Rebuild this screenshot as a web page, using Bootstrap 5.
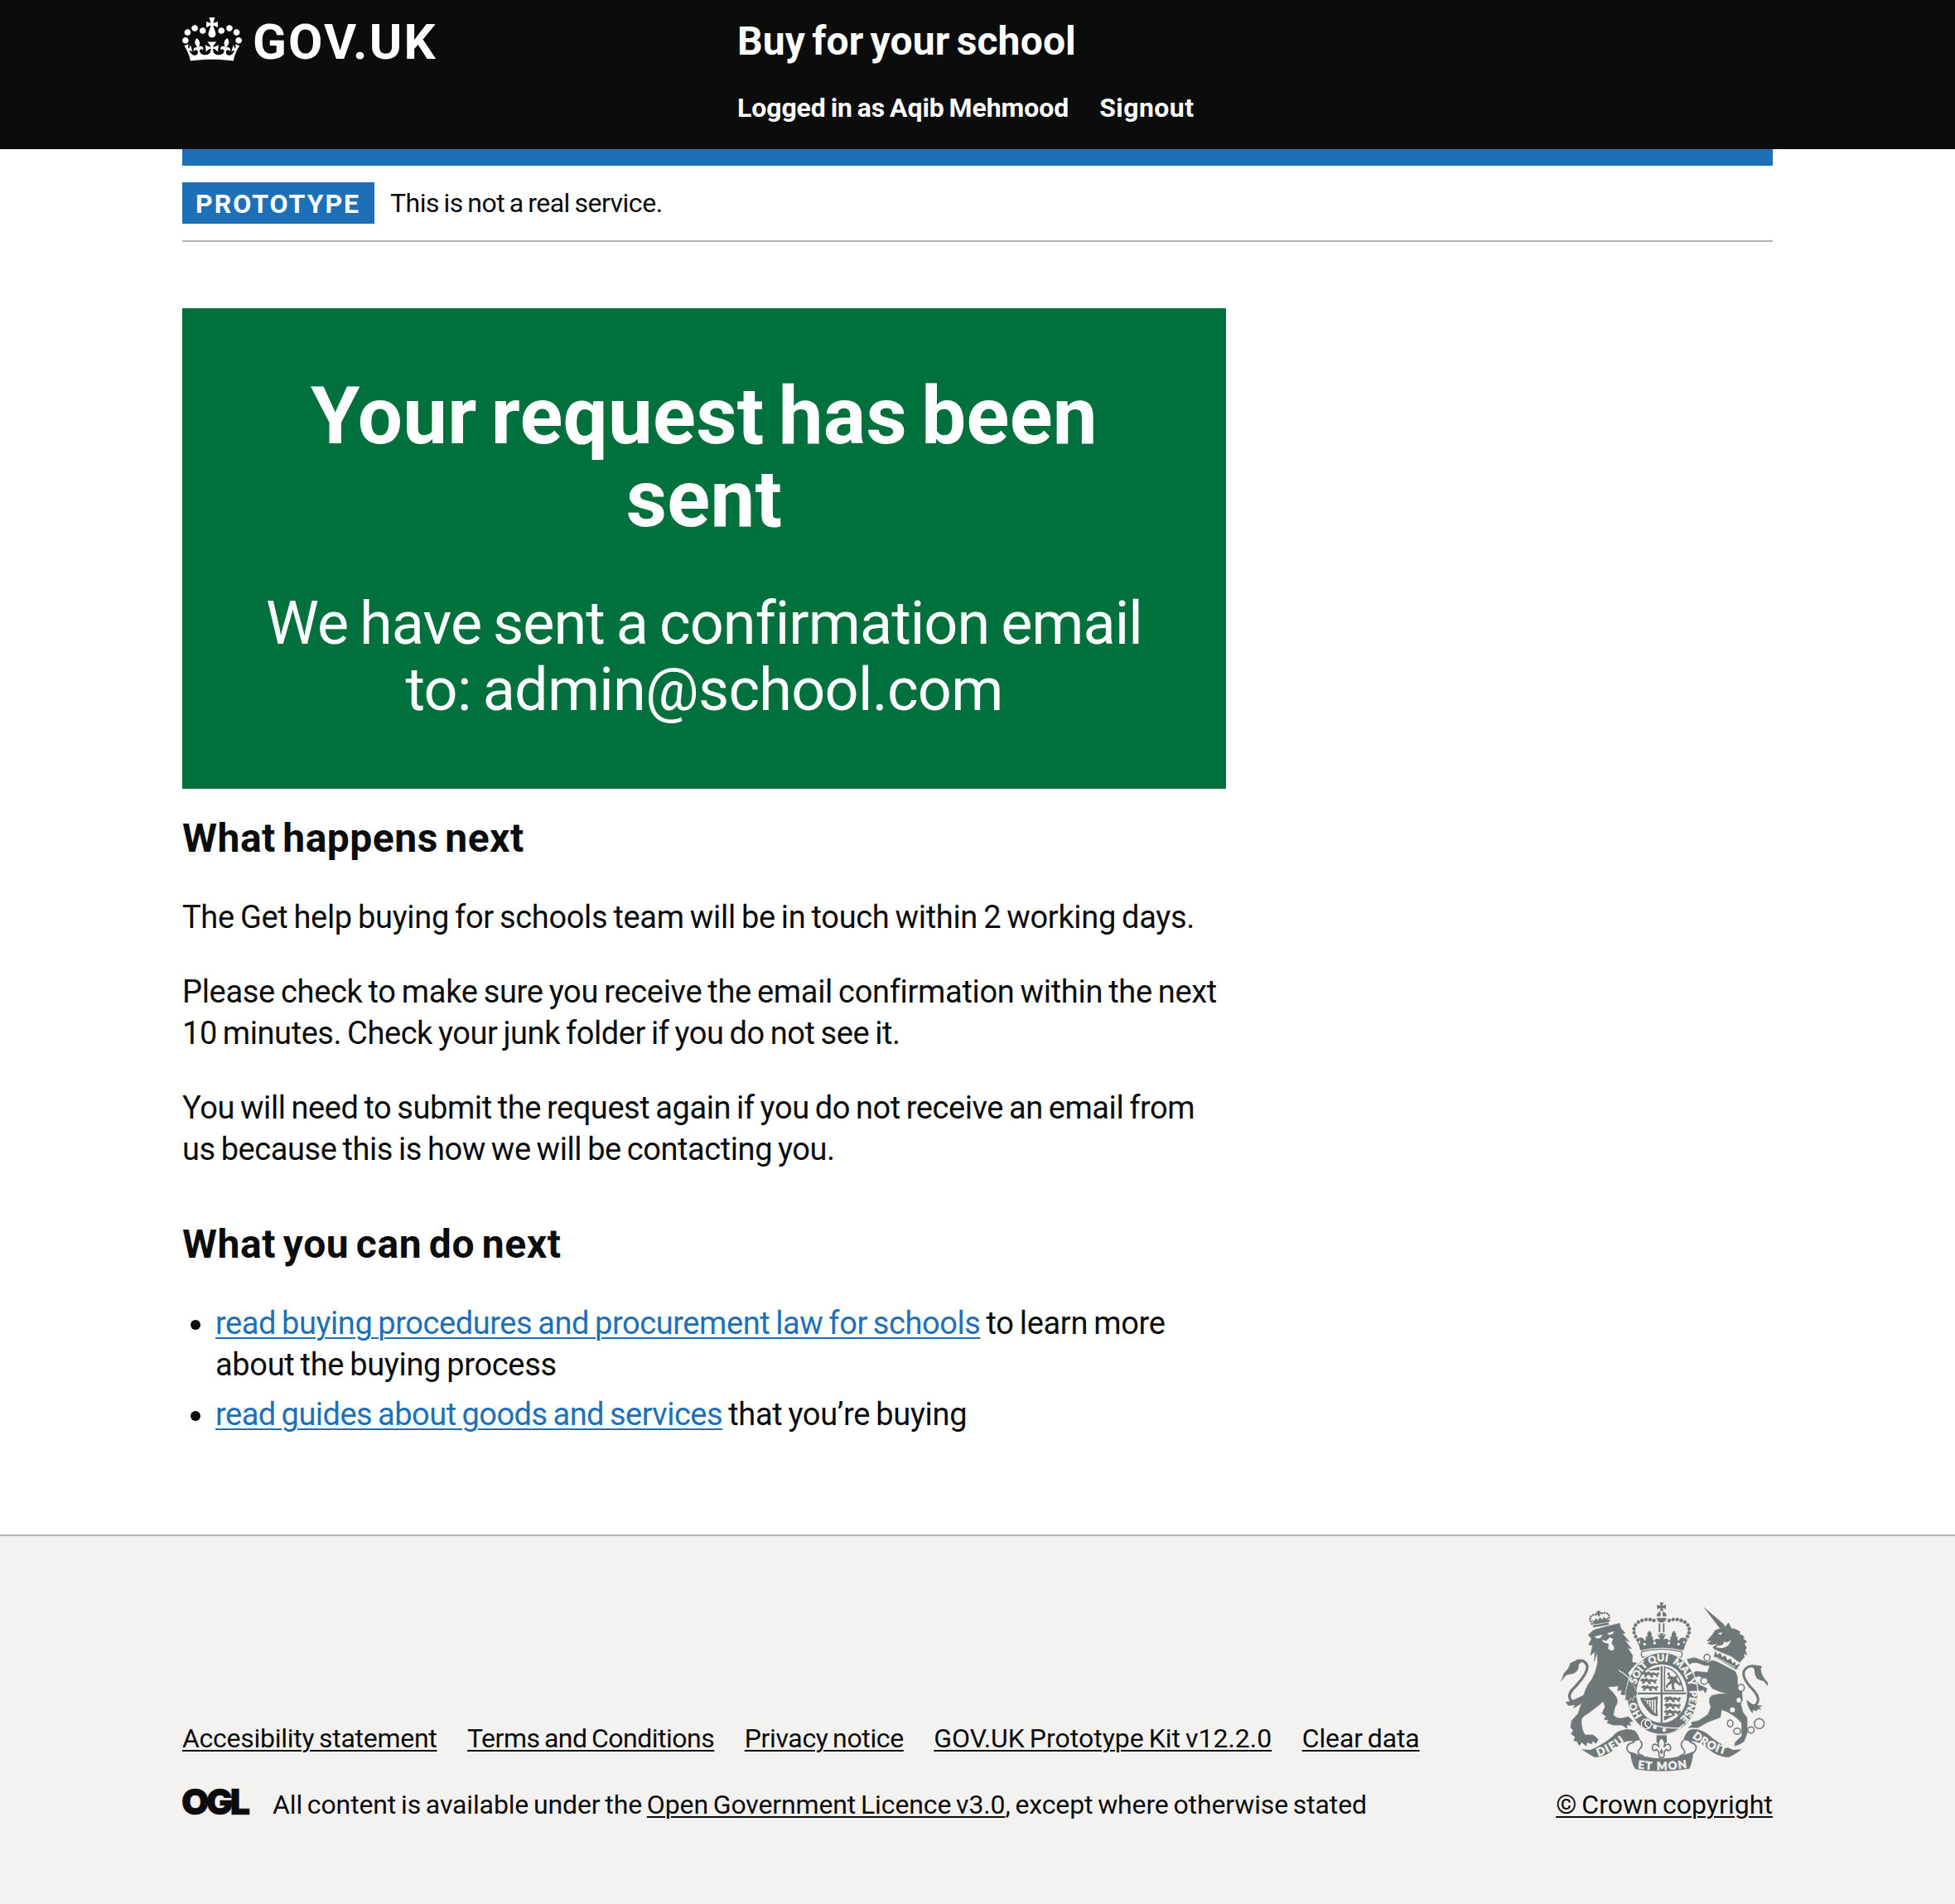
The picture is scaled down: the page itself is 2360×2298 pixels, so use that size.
<!DOCTYPE html>
<html lang="en">
<head>
<meta charset="utf-8">
<meta name="viewport" content="width=device-width, initial-scale=1">
<title>Your request has been sent - Buy for your school</title>
<link href="https://cdn.jsdelivr.net/npm/bootstrap@5.3.0/dist/css/bootstrap.min.css" rel="stylesheet">
<style>
  :root { --ink:#0b0c0c; --brand:#1d70b8; --rule:#b1b4b6; --go:#00703c; --pale:#f3f2f1; }
  body { font-family:Roboto,"Liberation Sans",sans-serif; color:var(--ink); font-size:38px; line-height:50px; letter-spacing:-.32px; word-spacing:-2px; }
  .page-width { width:1920px; }
  .site-header { background:var(--ink); height:180px; padding-top:20px; }
  .site-header a, .site-header a:hover { color:#fff; }
  .logo-col { width:670px; }
  .crown-mark { width:72px; height:53px; margin-top:1px; }
  .logotype { font-size:60px; line-height:62px; letter-spacing:2.2px; margin-left:13px; }
  .service-name { font-size:48px; line-height:60px; letter-spacing:.15px; word-spacing:-4px; margin-bottom:30px; }
  .account-nav { font-size:32px; line-height:40px; letter-spacing:-.08px; gap:37px; }
  .account-nav .signout { letter-spacing:.45px; }
  .brand-bar { height:20px; background:var(--brand); }
  .phase { padding:20px 0; border-bottom:2px solid var(--rule); height:92px; }
  .phase-tag { background:var(--brand); font-size:32px; line-height:30px; letter-spacing:2px; padding:11px 0 9px 16px; width:232px; height:50px; }
  .phase-text { font-size:32px; line-height:40px; letter-spacing:-.48px; margin-left:19px; padding-top:5px; }
  .two-thirds { width:1260px; }
  .content { padding-top:80px; padding-bottom:120px; }
  .confirm { background:var(--go); padding:80px 80px 79px; }
  .confirm h1 { font-size:96px; line-height:100px; letter-spacing:.3px; word-spacing:-7px; margin-bottom:61px; }
  .confirm div { font-size:72px; line-height:80px; letter-spacing:-.95px; word-spacing:-3px; }
  .confirm .address { letter-spacing:-.75px; }
  .tighter { letter-spacing:-.43px; }
  .section-title { font-size:48px; line-height:60px; letter-spacing:.5px; word-spacing:-4px; margin:30px 0 40px; }
  .section-title.second { margin-top:60px; letter-spacing:.6px; }
  .content p { margin-bottom:40px; }
  .steps { padding-left:40px; }
  .steps li + li { margin-top:10px; }
  a { text-decoration-thickness:2px; text-underline-offset:.1em; }
  .steps a { color:var(--brand); }
  .steps .guides { letter-spacing:-.52px; }
  .site-footer { background:var(--pale); border-top:2px solid var(--rule); padding:80px 0 100px; font-size:32px; line-height:40px; letter-spacing:-.13px; }
  .site-footer a { color:var(--ink); }
  .foot-links { gap:36.5px; margin-bottom:40px; }
  .foot-links .lt-a { letter-spacing:-.27px; }
  .foot-links .lt-b { letter-spacing:-.5px; }
  .foot-links .lt-c { letter-spacing:-.37px; }
  .foot-links .lt-d { letter-spacing:0; }
  .ogl-mark { width:82px; height:33px; margin-right:27px; overflow:visible; }
  .crest { width:250px; height:204px; margin-bottom:20px; margin-right:6px; }
  .crown-link { letter-spacing:.05px; }
</style>
</head>
<body class="bg-white">

<header class="site-header">
  <div class="page-width mx-auto d-flex">
    <a class="logo-col d-flex text-decoration-none" href="#">
      <svg class="crown-mark" viewBox="0 0 132 97" fill="#fff" fill-rule="evenodd" aria-hidden="true"><path d="M25 30.2c3.5 1.5 7.7-.2 9.1-3.7 1.5-3.6-.2-7.8-3.9-9.2-3.6-1.4-7.6.3-9.1 3.9-1.4 3.5.3 7.5 3.9 9zM9 39.5c3.6 1.5 7.8-.2 9.2-3.7 1.5-3.6-.2-7.8-3.9-9.1-3.6-1.5-7.6.2-9.1 3.8-1.4 3.5.3 7.5 3.8 9zM4.4 57.2c3.5 1.5 7.7-.2 9.1-3.8 1.5-3.6-.2-7.7-3.9-9.1-3.5-1.5-7.6.3-9.1 3.8-1.4 3.5.3 7.6 3.9 9.1zm38.3-21.4c3.5 1.5 7.7-.2 9.1-3.8 1.5-3.6-.2-7.7-3.9-9.1-3.6-1.5-7.6.3-9.1 3.8-1.3 3.6.4 7.7 3.9 9.1zm64.4-5.6c-3.6 1.5-7.8-.2-9.1-3.7-1.5-3.6.2-7.8 3.8-9.2 3.6-1.4 7.7.3 9.2 3.9 1.3 3.5-.4 7.5-3.9 9zm15.9 9.3c-3.6 1.5-7.7-.2-9.1-3.7-1.5-3.6.2-7.8 3.7-9.1 3.6-1.5 7.7.2 9.2 3.8 1.5 3.5-.3 7.5-3.8 9zm4.7 17.7c-3.6 1.5-7.8-.2-9.2-3.8-1.5-3.6.2-7.7 3.9-9.1 3.6-1.5 7.7.3 9.2 3.8 1.3 3.5-.4 7.6-3.9 9.1zM89.3 35.8c-3.6 1.5-7.8-.2-9.2-3.8-1.4-3.6.2-7.7 3.9-9.1 3.6-1.5 7.7.3 9.2 3.8 1.4 3.6-.3 7.7-3.9 9.1zM69.7 17.7l8.9 4.7V9.3l-8.9 2.8c-.2-.3-.5-.6-.9-.9L72.4 0H59.6l3.5 11.2c-.3.3-.6.5-.9.9l-8.8-2.8v13.1l8.8-4.7c.3.3.6.7.9.9l-5 15.4v.1c-.2.8-.4 1.6-.4 2.4 0 4.1 3.1 7.5 7 8.1h.2c.3 0 .7.1 1 .1.4 0 .7 0 1-.1h.2c4-.6 7.1-4.1 7.1-8.1 0-.8-.1-1.7-.4-2.4V34l-5.1-15.4c.4-.2.7-.6 1-.9zM66 92.8c16.9 0 32.8 1.1 47.1 3.2 4-16.9 8.9-26.7 14-33.5l-9.6-3.4c1 4.9 1.1 7.2 0 10.2-1.5-1.4-3-4.3-4.2-8.7L108.6 76c2.8-2 5-3.2 7.5-3.3-4.4 9.4-10 11.9-13.6 11.2-4.3-.8-6.3-4.6-5.6-7.9 1-4.7 5.7-5.9 8-.5 4.3-8.7-3-11.4-7.6-8.8 7.1-7.2 7.9-13.5 2.1-21.1-8 6.1-8.1 12.3-4.5 20.8-4.7-5.4-12.1-2.5-9.5 6.2 3.4-5.2 7.9-2 7.2 3.1-.6 4.3-6.4 7.8-13.5 7.2-10.3-.9-10.9-8-11.2-13.8 2.5-.5 7.1 1.8 11 7.3L80.2 60c-4.1 4.4-8 5.3-12.3 5.4 1.4-4.4 8-11.6 8-11.6H55.5s6.4 7.2 7.9 11.6c-4.2-.1-8-1-12.3-5.4l1.4 16.4c3.9-5.5 8.5-7.7 10.9-7.3-.3 5.8-.9 12.8-11.1 13.8-7.2.6-12.9-2.9-13.5-7.2-.7-5 3.8-8.3 7.1-3.1 2.7-8.7-4.6-11.6-9.4-6.2 3.7-8.5 3.6-14.7-4.6-20.8-5.8 7.6-5 13.9 2.2 21.1-4.7-2.6-11.9.1-7.7 8.8 2.3-5.5 7.1-4.2 8.1.5.7 3.3-1.3 7.1-5.7 7.9-3.5.7-9-1.8-13.5-11.2 2.5.1 4.7 1.3 7.5 3.3l-4.7-15.4c-1.2 4.4-2.7 7.2-4.3 8.7-1.1-3-.9-5.3 0-10.2l-9.5 3.4c5 6.9 9.9 16.7 14 33.5 14.8-2.1 30.8-3.2 47.7-3.2z"/></svg>
      <span class="logotype fw-bold">GOV.UK</span>
    </a>
    <div>
      <a class="service-name d-block fw-bold text-decoration-none" href="#">Buy for your school</a>
      <nav class="account-nav nav fw-bold">
        <a class="text-decoration-none" href="#">Logged in as Aqib Mehmood</a>
        <a class="signout text-decoration-none" href="#">Signout</a>
      </nav>
    </div>
  </div>
</header>

<div class="page-width mx-auto">
  <div class="brand-bar"></div>
  <div class="phase d-flex align-items-start">
    <strong class="phase-tag text-white">PROTOTYPE</strong>
    <span class="phase-text">This is not a real service.</span>
  </div>

  <main class="content">
    <div class="two-thirds">
      <section class="confirm text-white text-center">
        <h1 class="fw-bold">Your request has been<br>sent</h1>
        <div>We have sent a confirmation email<br><span class="address">to: admin@school.com</span></div>
      </section>

      <h2 class="section-title fw-bold">What happens next</h2>
      <p>The Get help buying for schools team will be in touch within 2 working days.</p>
      <p>Please check to make sure you receive the email confirmation within the next<br><span class="tighter">10 minutes. Check your junk folder if you do not see it.</span></p>
      <p class="tighter">You will need to submit the request again if you do not receive an email from<br>us because this is how we will be contacting you.</p>

      <h2 class="section-title second fw-bold">What you can do next</h2>
      <ul class="steps mb-0">
        <li><a class="tighter" href="#">read buying procedures and procurement law for schools</a> to learn more<br>about the buying process</li>
        <li><a class="guides" href="#">read guides about goods and services</a> that you’re buying</li>
      </ul>
    </div>
  </main>
</div>

<footer class="site-footer">
  <div class="page-width mx-auto d-flex justify-content-between align-items-end">
    <div>
      <nav class="foot-links nav">
        <a class="lt-a" href="#">Accesibility statement</a>
        <a class="lt-b" href="#">Terms and Conditions</a>
        <a class="lt-c" href="#">Privacy notice</a>
        <a class="lt-d" href="#">GOV.UK Prototype Kit v12.2.0</a>
        <a href="#">Clear data</a>
      </nav>
      <div class="d-flex align-items-start">
        <svg class="ogl-mark" viewBox="0 0 82 33" role="img" aria-label="Open Government Licence">
          <text x="-1" y="32" textLength="83" font-family="Inter,sans-serif" font-weight="900" font-size="43" fill="#0b0c0c" stroke="#0b0c0c" stroke-width=".6" letter-spacing="0">OGL</text>
        </svg>
        <span>All content is available under the <a href="#">Open Government Licence v3.0</a>, except where otherwise stated</span>
      </div>
    </div>
    <div class="d-flex flex-column align-items-end">
      <svg class="crest" viewBox="72 72 750 612" fill="#6f7779" aria-hidden="true">
        <defs>
          <path id="garter" d="M440,521 A99,118 0 0 1 440,285 A99,118 0 0 1 440,521"/>
          <path id="scrollL" d="M208,630 Q276,606 322,560"/>
          <path id="scrollM" d="M351,673 Q438,685 530,671"/>
          <path id="scrollR" d="M548,560 Q602,606 680,626"/>
          <path id="pacing" d="M0,8 L8,2 L16,4 L22,0 L30,6 L40,4 L52,8 L58,3 L60,10 L54,13 L58,20 L50,18 L46,12 L36,13 L38,21 L30,20 L28,13 L18,12 L14,19 L6,20 L10,13 Z" stroke="#6f7779" stroke-width="2"/>
        </defs>

        <!-- lion: tail, body, crown -->
        <path d="M128,440 Q88,420 114,388 Q172,330 168,302 Q160,276 128,285" fill="none" stroke="#6f7779" stroke-width="10"/>
        <path d="M72,360 L84,328 Q104,310 106,292 Q130,276 152,284 L138,296 Q138,322 118,330 L92,335 Z"/>
        <path d="M89,433 L112,428 L160,405 L155,430 Q135,450 115,455 L124,444 L100,446 Z"/>
        <path stroke="#6f7779" stroke-width="2" stroke-linejoin="round" d="M172,190 L192,172 L235,160 L285,148 L290,166 L305,183 L296,186 L320,214 L304,208 L328,240 L314,236 L332,264 L330,288 L347,292 L328,312 L315,328 L330,350 L345,372 L348,400 L335,425 L322,430 L305,424 L310,408 L290,405 L294,388 L278,392 L282,374 L242,378 L264,402 Q288,428 268,452 L262,480 Q276,494 290,492 L318,486 L333,502 L320,506 L326,518 L312,514 L312,528 L294,516 L262,516 L240,508 L246,498 L230,496 L236,484 L222,474 L233,450 L226,430 Q205,450 165,478 Q148,486 147,500 Q146,532 160,552 L190,552 L208,568 L200,582 L184,572 L186,584 L166,578 L165,592 L148,578 L140,590 L130,574 L120,574 L124,558 L110,548 L118,535 L108,525 L112,500 L135,475 L150,430 Q160,380 185,350 Q200,325 206,290 L204,250 L194,285 L196,250 L180,264 L188,228 L173,225 L184,204 Z"/>
        <g fill="#f3f2f1">
          <path d="M194,196 L224,188 L216,201 L204,203 Z M240,184 L266,176 L260,187 L248,190 Z"/>
          <path d="M222,206 L236,212 L250,198 L262,205 L256,220 Q270,236 264,244 Q254,250 244,240 L246,222 L226,216 Z"/>
        </g>
        <path d="M282,318 Q322,340 340,374" fill="none" stroke="#f3f2f1" stroke-width="4"/>
        <g transform="rotate(-10 215 140)">
          <path d="M186,150 h58 v8 h-58 z M190,148 l-3,-18 8,6 7,-10 6,10 8,-10 8,10 6,-10 7,10 7,-6 -2,18 z"/>
          <path d="M210,110 l-3,-8 h14 l-3,8 v12 h-8 z M205,108 h20 v6 h-20z"/>
          <g fill="none" stroke="#6f7779" stroke-width="8" stroke-linecap="round" stroke-dasharray="0.1 9.5"><path d="M184,144 Q170,108 208,114"/><path d="M246,144 Q260,108 222,114"/></g>
        </g>

        <!-- unicorn: tail, body, collar, chain -->
        <path d="M768,450 Q804,430 772,392 Q726,346 736,320 Q748,296 782,304" fill="none" stroke="#6f7779" stroke-width="9"/>
        <path d="M822,375 L808,358 L786,350 Q772,335 774,315 L765,305 L786,300 L802,303 L796,312 Q800,340 822,362 Z"/>
        <path d="M745,425 L766,440 L804,447 L790,452 L801,460 L782,458 L786,466 L768,462 L768,474 Q750,458 745,425 Z"/>
        <path d="M588,87 L662,150 L668,162 L648,166 Z"/>
        <path d="M600,212 L620,190 L632,172 L668,160 L680,145 L690,166 Q712,168 724,180 L718,186 Q734,190 738,200 L732,202 L747,214 L738,222 L746,236 L741,244 L748,264 L736,258 L738,270 L720,290 L690,268 L630,244 L622,234 L640,222 L616,226 L602,220 L618,212 Z"/>
        <path d="M640,184 L658,180 L652,190 Z M634,234 Q680,248 690,205 Q678,222 664,214 Q660,232 640,228 Z" fill="#f3f2f1"/>
        <path stroke="#6f7779" stroke-width="2" stroke-linejoin="round" d="M620,282 L640,288 L704,322 L712,342 L712,370 L728,396 L730,424 L724,440 L732,470 L747,490 L747,545 L736,575 L720,585 L702,592 L704,578 L728,556 L728,510 Q700,475 655,460 L650,488 L605,505 L570,525 L534,525 L548,516 L545,506 L572,500 L606,478 L616,450 Q604,425 618,410 Q650,400 690,404 Q655,400 622,384 Q606,362 598,350 L572,338 L556,344 L570,368 L602,384 L596,400 L588,388 L576,392 L560,384 L550,330 L562,322 L604,326 L612,300 L594,300 L566,290 L548,290 L538,296 L530,278 L556,272 L590,284 L606,290 Z"/>
        <path d="M632,243 L722,292 L710,320 L624,274 Z" fill="#f3f2f1"/>
        <path d="M626,268 L632,248 L640,262 L650,254 L657,270 L668,264 L676,281 L688,275 L694,292 L706,287 L704,301 L722,294 L708,316 Z"/>
        <path d="M634,270 L704,307" stroke="#f3f2f1" stroke-width="3"/>
        <g fill="none" stroke="#6f7779" stroke-width="4.5">
          <ellipse cx="602" cy="272" rx="11" ry="12"/><ellipse cx="592" cy="356" rx="13" ry="12" fill="#f3f2f1"/><ellipse cx="725" cy="381" rx="12" ry="13" fill="#f3f2f1"/>
          <ellipse cx="686" cy="510" rx="10" ry="13"/><ellipse cx="711" cy="538" rx="13" ry="11"/><ellipse cx="761" cy="534" rx="12" ry="11"/><circle cx="791" cy="511" r="18"/>
        </g>
        <g fill="#f3f2f1"><ellipse cx="717" cy="426" rx="8" ry="9"/><ellipse cx="694" cy="461" rx="9" ry="9"/></g>

        <!-- royal crown -->
        <path d="M431,72 h13 l-3,12 12,-4 v16 l-12,-4 3,11 h-13 l3,-11 -13,4 v-16 l13,4 z"/>
        <path d="M419,122 Q422,106 434,106 V122 Z M441,106 Q453,106 456,122 H441 Z M419,128 H456 Q452,145 437,145 Q422,145 419,128 Z"/>
        <path d="M427,148 h6 v32 h-6 z M442,148 h6 v32 h-6 z"/>
        <g fill="none" stroke="#6f7779" stroke-width="13" stroke-linecap="round" stroke-dasharray="0.1 14.6">
          <path d="M352,208 Q322,170 352,144 Q385,124 420,142"/><path d="M523,208 Q553,170 523,144 Q490,124 455,142"/>
        </g>
        <path d="M343,204 L358,222 Q364,212 354,200 Q374,196 376,212 Q384,204 378,194 L386,198 Q382,184 394,174 Q406,186 400,198 L408,194 Q402,204 410,212 Q416,198 432,206 L422,186 L434,192 L430,184 H446 L441,192 L453,186 L444,206 Q460,198 466,212 Q472,204 468,194 L475,198 Q470,186 482,174 Q494,186 489,198 L497,194 Q492,204 499,212 Q504,196 522,200 Q512,212 518,222 L532,204 Q524,222 516,246 Q437,226 360,246 Q356,222 343,204 Z"/>
        <g fill="#f3f2f1"><circle cx="376" cy="223" r="5"/><circle cx="412" cy="219" r="5"/><circle cx="464" cy="219" r="5"/><circle cx="499" cy="223" r="5"/></g>
        <path d="M366,250 Q437,232 509,250 Q517,262 506,272 Q437,244 370,272 Q360,262 366,250 Z" fill="#f3f2f1" stroke="#6f7779" stroke-width="4"/>

        <!-- garter and shield -->
        <ellipse cx="440" cy="403" rx="131" ry="152" fill="#f3f2f1"/>
        <ellipse cx="440" cy="403" rx="127" ry="148"/>
        <ellipse cx="438" cy="402" rx="92" ry="106" fill="#f3f2f1"/>
        <g font-family="Lato,sans-serif" font-weight="900" font-size="36" fill="#f3f2f1" stroke="#f3f2f1" stroke-width="1.4" letter-spacing="0" word-spacing="0">
          <text><textPath href="#garter" startOffset="12.5%">HO</textPath></text>
          <text><textPath href="#garter" startOffset="30%">SOIT</textPath></text>
          <text><textPath href="#garter" startOffset="43%">QUI</textPath></text>
          <text><textPath href="#garter" startOffset="55.5%">MAL</textPath></text>
          <text><textPath href="#garter" startOffset="67.5%">Y</textPath></text>
          <text><textPath href="#garter" startOffset="73.2%">PENSE</textPath></text>
        </g>
        <path d="M434,303 h7 v206 h-7 z M350,398 h176 v7 H350 z"/>
        <g><use href="#pacing" x="368" y="322"/><use href="#pacing" x="360" y="346"/><use href="#pacing" x="364" y="371"/><use href="#pacing" x="446" y="412"/><use href="#pacing" x="446" y="436"/><use href="#pacing" x="446" y="460"/><path d="M385,318 L430,304 V318 Z M446,484 L486,480 L446,500 Z"/></g>
        <path d="M448,306 Q500,314 516,392 H448 Z" fill="none" stroke="#6f7779" stroke-width="5"/>
        <path d="M456,330 L466,324 L468,338 L484,342 L496,332 L492,350 L500,362 L510,360 L504,376 L494,366 L484,362 L482,376 L488,388 L474,386 L474,366 L462,372 L456,386 L452,374 L466,358 L470,350 L456,348 L464,340 Z"/>
        <path d="M360,416 Q390,422 424,412 Q420,450 424,484 Q400,486 376,450 Q362,432 360,416 Z"/>
        <path d="M374,424 L416,476 V424 Q392,430 374,424 Z" fill="#f3f2f1"/>
        <path d="M382,427 V434 M391,428 V446 M400,428 V456 M409,427 V466" stroke="#6f7779" stroke-width="4"/>
        <!-- lion's paw resting on the garter -->
        <path d="M318,352 L338,374 L350,400 L344,416 L338,410 L334,428 L326,418 L318,430 L306,424 L306,400 Z" stroke="#f3f2f1" stroke-width="2"/>
        <!-- garter strap and buckle -->
        <path d="M372,500 Q430,532 502,526 L520,512 Q484,554 430,550 Q390,546 362,524 Z" stroke="#f3f2f1" stroke-width="4"/>
        <circle cx="382" cy="512" r="18" stroke="#f3f2f1" stroke-width="4"/>
        <path d="M396,500 Q380,494 378,508 Q378,522 392,526" fill="none" stroke="#f3f2f1" stroke-width="5"/>
        <g fill="#f3f2f1"><circle cx="413" cy="524" r="7"/><circle cx="447" cy="534" r="7"/></g>

        <!-- motto scroll -->
        <path d="M148,604 L180,606 Q240,580 275,542 Q310,524 340,536 Q352,546 360,572 Q345,570 338,578 L330,574 Q300,570 268,602 Q236,632 196,633 Q176,624 148,604 Z"/>
        <path d="M728,604 L696,606 Q640,582 600,545 Q566,524 538,534 Q522,546 516,572 Q532,570 540,578 L548,574 Q580,578 606,602 Q640,632 680,633 Q702,624 728,604 Z"/>
        <path d="M360,572 Q374,588 356,606 Q344,620 372,628 M338,578 Q310,584 312,602 Q316,620 340,624 M516,572 Q500,588 518,606 Q530,620 502,628 M540,578 Q566,584 562,602 Q558,620 536,624" fill="none" stroke="#6f7779" stroke-width="5"/>
        <path d="M324,612 Q437,662 552,612 Q550,650 538,674 Q437,692 342,676 Q326,650 324,612 Z"/>
        <g font-family="Lato,sans-serif" font-weight="900" font-size="40" fill="#f3f2f1" stroke="#f3f2f1" stroke-width="1.6" letter-spacing="0" word-spacing="0">
          <text><textPath href="#scrollL" letter-spacing="5">DIEU</textPath></text>
          <text letter-spacing="4.5"><textPath href="#scrollM">ET MON</textPath></text>
          <text letter-spacing="2.5"><textPath href="#scrollR">DROIT</textPath></text>
        </g>
        <path d="M419,553 H456 V580 H419 Z"/>
        <path d="M437,560 Q456,580 445,596 Q462,576 470,594 Q472,610 458,608 Q456,598 448,612 L446,622 Q450,634 437,634 Q424,634 429,622 L426,612 Q418,598 416,608 Q402,610 404,594 Q412,576 429,596 Q418,580 437,560 Z" fill="#f3f2f1" stroke="#6f7779" stroke-width="5"/>
        <path d="M437,600 L443,614 L437,622 L431,614 Z"/>
      </svg>
      <a class="crown-link" href="#">© Crown copyright</a>
    </div>
  </div>
</footer>

<script src="https://cdn.jsdelivr.net/npm/bootstrap@5.3.0/dist/js/bootstrap.bundle.min.js"></script>
</body>
</html>
